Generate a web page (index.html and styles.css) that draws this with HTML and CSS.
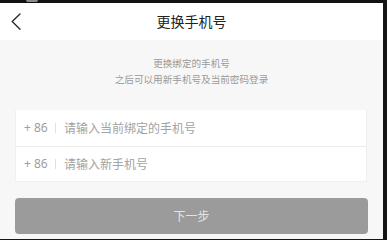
FILE: index.html
```html
<!DOCTYPE html>
<html lang="zh-CN">
<head>
<meta charset="utf-8">
<title>更换手机号</title>
<link rel="stylesheet" href="styles.css">
</head>
<body>
<div class="screen">
  <div class="statusbar"><span class="status-dot"></span></div>
  <header class="navbar">
    <span class="back">
      <svg width="10" height="18" viewBox="0 0 10 18"><polyline points="9,1 1.2,8.6 9,16.2" fill="none" stroke="#2b2b2b" stroke-width="1.4" stroke-linecap="round" stroke-linejoin="round"/></svg>
    </span>
    <h1 class="title">更换手机号</h1>
  </header>
  <section class="intro">
    <p class="intro-line">更换绑定的手机号</p>
    <p class="intro-line">之后可以用新手机号及当前密码登录</p>
  </section>
  <div class="card">
    <div class="row">
      <span class="code">+ 86</span>
      <span class="sep"></span>
      <span class="placeholder">请输入当前绑定的手机号</span>
    </div>
    <div class="row">
      <span class="code">+ 86</span>
      <span class="sep"></span>
      <span class="placeholder">请输入新手机号</span>
    </div>
  </div>
  <button class="next">下一步</button>
</div>
</body>
</html>
```
FILE: styles.css
```css
* { box-sizing: border-box; }
html, body { margin: 0; padding: 0; }
body {
  background: #151515;
  width: 387px;
  height: 239px;
  overflow: hidden;
  font-family: "Noto Sans", "Noto Sans CJK SC", sans-serif;
}
.screen {
  width: 383px;
  height: 239px;
  background: #f7f7f7;
  display: flex;
  flex-direction: column;
}
.statusbar {
  height: 3px;
  background: #111;
  padding-left: 26px;
  display: flex;
}
.status-dot {
  width: 12px;
  height: 2px;
  background: #8a8a8a;
  border-radius: 0 0 6px 6px;
}
.navbar {
  height: 37px;
  background: #fff;
  display: flex;
  align-items: center;
  justify-content: center;
  position: relative;
}
.back {
  position: absolute;
  left: 11px;
  top: 10px;
  display: flex;
}
.title {
  margin: 0;
  font-size: 14px;
  font-weight: 400;
  color: #222;
  line-height: 20px;
}
.intro {
  padding: 16px 0 22px;
  text-align: center;
}
.intro-line {
  margin: 0;
  font-size: 9.6px;
  line-height: 16px;
  color: #9a9a9a;
}
.card {
  margin: 0 16px 0 15px;
  background: #fff;
  border: 1px solid #f0f0f0;
  border-top: 0;
}
.row {
  height: 35.5px;
  display: flex;
  align-items: center;
  padding-left: 8px;
  font-size: 12px;
  color: #9e9e9e;
}
.row + .row { border-top: 1px solid #ececec; }
.code { width: 24px; white-space: nowrap; }
.sep {
  width: 1px;
  height: 10px;
  background: #e0e0e0;
  margin: 0 8px 0 7px;
}
.placeholder { color: #a3a3a3; }
.next {
  margin: 16px 15px 0 15px;
  height: 36px;
  border: 0;
  border-radius: 4px;
  background: #9b9b9b;
  color: #e4e4e4;
  font-family: "Noto Sans", "Noto Sans CJK SC", sans-serif;
  font-size: 12px;
  padding: 0;
}
```
